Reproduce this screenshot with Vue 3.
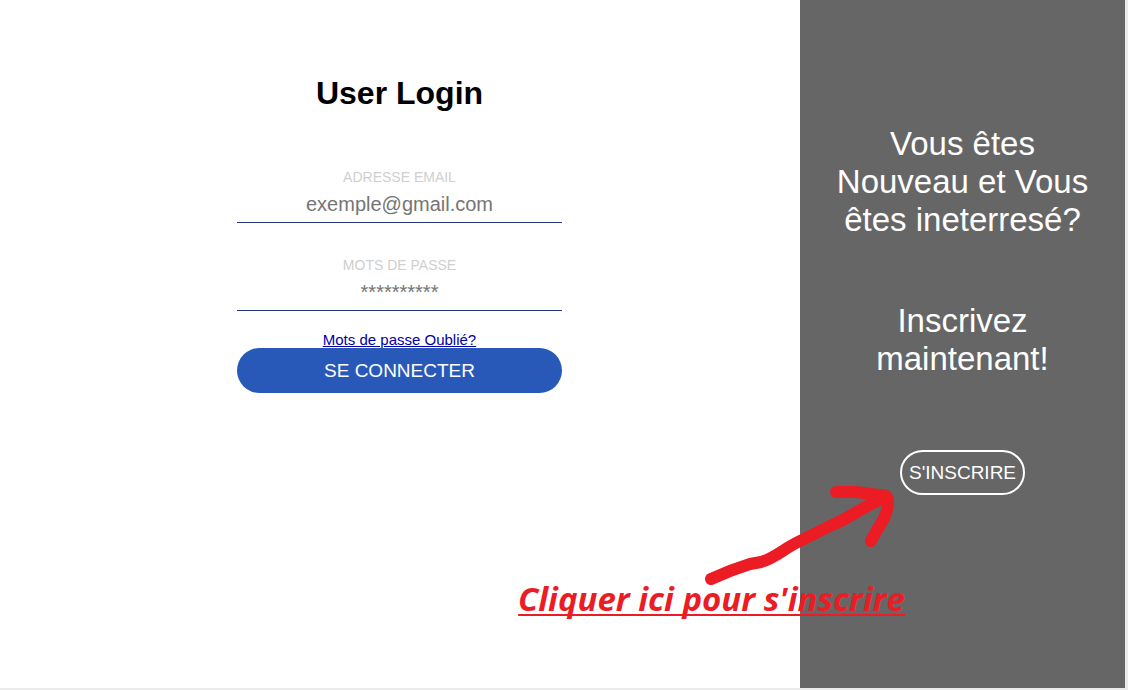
<script setup>
import { ref } from 'vue'

const email = ref('')
const password = ref('')
</script>

<template>
  <div class="page">
    <main class="login">
      <form class="form" @submit.prevent>
        <h1 class="title">User Login</h1>
        <div class="field">
          <label for="email">ADRESSE EMAIL</label>
          <input id="email" v-model="email" type="email" placeholder="exemple@gmail.com" />
        </div>
        <div class="field">
          <label for="password">MOTS DE PASSE</label>
          <input id="password" v-model="password" type="password" placeholder="**********" />
        </div>
        <a class="forgot" href="#">Mots de passe Oublié?</a>
        <button class="submit" type="submit">SE CONNECTER</button>
      </form>
    </main>

    <aside class="signup">
      <p>Vous êtes Nouveau et Vous êtes ineterresé?</p>
      <p>Inscrivez maintenant!</p>
      <button class="register" type="button">S'INSCRIRE</button>
      <div class="note">
        <svg class="arrow" width="200" height="100" viewBox="705 480 200 100" aria-hidden="true">
          <path d="M711 579 C724 573 737 568 750 564 L761 562 C773 559 784 549 796 543 L832 525 C848 519 860 508 886 497 M836 492 L856 492 C866 493 874 495 882 495 Q889 495 888 503 C887 519 878 526 871 541" />
          <path class="tip" d="M866 496 L886 494 L886 501 L872 506 Z" />
        </svg>
        <span class="note-text">Cliquer ici pour s'inscrire</span>
      </div>
    </aside>
  </div>
</template>

<style>
body {
  margin: 0;
  background: #ebebeb;
}
</style>

<style scoped>
.page {
  display: flex;
  box-sizing: border-box;
  min-height: 100vh;
  padding: 0 3px 2px 0;
  font-family: "Liberation Sans", Arial, sans-serif;
  background: #ebebeb;
}

.login {
  flex: 1;
  display: flex;
  justify-content: center;
  align-items: flex-start;
  padding-right: 1px;
  background: #fff;
}

.form {
  display: flex;
  flex-direction: column;
  align-items: center;
  width: 325px;
  padding-top: 74px;
}

.title {
  margin: 0 0 57px;
  font-size: 32px;
  line-height: 38px;
  color: #000;
}

.field {
  display: flex;
  flex-direction: column;
  width: 100%;
  margin-bottom: 34px;
}

.field label {
  font-size: 14px;
  line-height: 17px;
  text-align: center;
  color: #cfcfcf;
}

.field input {
  box-sizing: border-box;
  width: 100%;
  height: 37px;
  margin: 0;
  padding: 0;
  border: 0;
  border-bottom: 1px solid #25357a;
  outline: 0;
  background: transparent;
  font: 20px "Liberation Sans", Arial, sans-serif;
  text-align: center;
}

.field input::placeholder {
  color: #757575;
  opacity: 1;
}

.forgot {
  margin-top: -13px;
  font-size: 15px;
  line-height: 16px;
  color: #0000a5;
}

.submit {
  width: 100%;
  height: 45px;
  padding: 0;
  border: 0;
  border-radius: 23px;
  background: #2859b8;
  color: #fff;
  font: 19px "Liberation Sans", Arial, sans-serif;
}

.signup {
  position: relative;
  box-sizing: border-box;
  width: 325px;
  padding: 125px 32px 0;
  background: #666;
  color: #fff;
  text-align: center;
}

.signup p {
  margin: 0 0 63px;
  font-size: 33px;
  line-height: 38px;
}

.signup p + p {
  padding: 0 32px;
  margin: 0 0 72px;
}

.register {
  width: 125px;
  height: 45px;
  padding: 0;
  border: 2px solid #fff;
  border-radius: 23px;
  background: transparent;
  color: #fff;
  font: 19px "Liberation Sans", Arial, sans-serif;
}

.note {
  position: absolute;
  top: 480px;
  right: 220px;
  display: flex;
  flex-direction: column;
  align-items: flex-end;
  color: #ec1c24;
  pointer-events: none;
}

.arrow {
  overflow: visible;
  fill: none;
  stroke: #ec1c24;
  stroke-width: 12;
  stroke-linecap: round;
  stroke-linejoin: round;
}

.tip {
  fill: #ec1c24;
  stroke-width: 2;
}

.note-text {
  font: italic bold 33px/38px "Open Sans", "Noto Sans", sans-serif;
  white-space: nowrap;
  text-decoration: underline 2px;
  text-underline-offset: 3px;
  text-decoration-skip-ink: none;
}
</style>
